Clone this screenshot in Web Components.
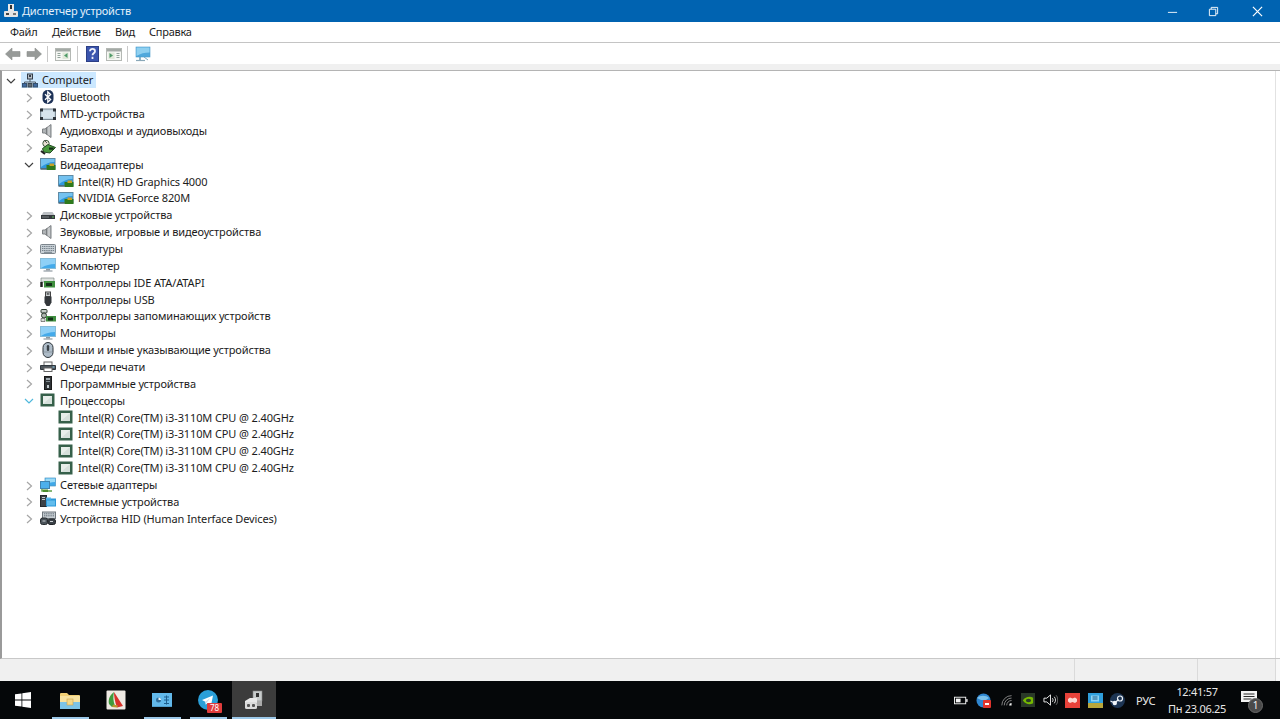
<!DOCTYPE html>
<html lang="ru">
<head>
<meta charset="utf-8">
<title>Диспетчер устройств</title>
<style>
    html, body { margin: 0; height: 100%; overflow: hidden; }
    body {
        display: flex;
        flex-direction: column;
        height: 719px;
        background: #f0f0f0;
        font: 11px "Noto Sans", "Open Sans", sans-serif;
        letter-spacing: -0.12px;
        color: #1c1c1c;
    }
</style>
</head>
<body>

<dm-titlebar>Диспетчер устройств</dm-titlebar>

<dm-menubar>
    <span style="width:42px">Файл</span>
    <span style="width:63px">Действие</span>
    <span style="width:34px">Вид</span>
    <span>Справка</span>
</dm-menubar>

<dm-toolbar></dm-toolbar>

<dm-tree>
    <dm-row level="0" open icon="computer" selected>Computer</dm-row>
    <dm-row level="1" closed icon="bluetooth">Bluetooth</dm-row>
    <dm-row level="1" closed icon="mtd">MTD-устройства</dm-row>
    <dm-row level="1" closed icon="speaker">Аудиовходы и аудиовыходы</dm-row>
    <dm-row level="1" closed icon="battery">Батареи</dm-row>
    <dm-row level="1" open icon="display">Видеоадаптеры</dm-row>
    <dm-row level="2" icon="display">Intel(R) HD Graphics 4000</dm-row>
    <dm-row level="2" icon="display">NVIDIA GeForce 820M</dm-row>
    <dm-row level="1" closed icon="disk">Дисковые устройства</dm-row>
    <dm-row level="1" closed icon="speaker">Звуковые, игровые и видеоустройства</dm-row>
    <dm-row level="1" closed icon="keyboard">Клавиатуры</dm-row>
    <dm-row level="1" closed icon="monitor">Компьютер</dm-row>
    <dm-row level="1" closed icon="ide">Контроллеры IDE ATA/ATAPI</dm-row>
    <dm-row level="1" closed icon="usb">Контроллеры USB</dm-row>
    <dm-row level="1" closed icon="storage">Контроллеры запоминающих устройств</dm-row>
    <dm-row level="1" closed icon="monitor">Мониторы</dm-row>
    <dm-row level="1" closed icon="mouse">Мыши и иные указывающие устройства</dm-row>
    <dm-row level="1" closed icon="printer">Очереди печати</dm-row>
    <dm-row level="1" closed icon="firmware">Программные устройства</dm-row>
    <dm-row level="1" open hot icon="cpu">Процессоры</dm-row>
    <dm-row level="2" icon="cpu">Intel(R) Core(TM) i3-3110M CPU @ 2.40GHz</dm-row>
    <dm-row level="2" icon="cpu">Intel(R) Core(TM) i3-3110M CPU @ 2.40GHz</dm-row>
    <dm-row level="2" icon="cpu">Intel(R) Core(TM) i3-3110M CPU @ 2.40GHz</dm-row>
    <dm-row level="2" icon="cpu">Intel(R) Core(TM) i3-3110M CPU @ 2.40GHz</dm-row>
    <dm-row level="1" closed icon="network">Сетевые адаптеры</dm-row>
    <dm-row level="1" closed icon="system">Системные устройства</dm-row>
    <dm-row level="1" closed icon="hid">Устройства HID (Human Interface Devices)</dm-row>
</dm-tree>

<dm-statusbar></dm-statusbar>

<dm-taskbar></dm-taskbar>

<script>
// all the little pictures, 16x16 unless the user sets another size
const ICONS = {
    app: '<rect x="5" y="1" width="6" height="7" fill="#e8e8e8"/><rect x="7" y="2" width="2" height="4" fill="#333"/><rect x="1" y="8" width="14" height="6" rx="1" fill="#e4e4e4"/><rect x="3" y="10" width="3" height="2" fill="#444"/><rect x="10" y="10" width="3" height="2" fill="#777"/>',
    back: '<path d="M0.500 8L7 2v3.500h8v5H7V14z" fill="#979a98" stroke="#8a8d8b" stroke-width=".6"/>',
    forward: '<path d="M15.500 8L9 2v3.500H1v5h8V14z" fill="#979a98" stroke="#8a8d8b" stroke-width=".6"/>',
    panel_l: '<rect x="0.500" y="2.500" width="15" height="12" fill="#f6f7f4" stroke="#b4b8b4"/><rect x="1" y="3" width="14" height="2.500" fill="#a4aaa6"/><path d="M2.500 7.500h3M2.500 9.500h3M2.500 11.500h3" stroke="#93a49c"/><rect x="7.500" y="6.500" width="6" height="6.500" fill="#dfe8d8"/><path d="M12.500 7v5l-3.500-2.500z" fill="#4f9a68"/>',
    panel_r: '<rect x="0.500" y="2.500" width="15" height="12" fill="#f6f7f4" stroke="#b4b8b4"/><rect x="1" y="3" width="14" height="2.500" fill="#a4aaa6"/><path d="M10.500 7.500h3M10.500 9.500h3M10.500 11.500h3" stroke="#93a49c"/><rect x="2.500" y="6.500" width="6" height="6.500" fill="#dfe8d8"/><path d="M3.500 7v5l3.500-2.500z" fill="#4f9a68"/>',
    help: '<rect x="1.500" y="0.500" width="12" height="15" fill="#3b55ae" stroke="#2c3f86"/><path d="M5 5.200c0-3.200 5-3.200 5 0 0 2-2.500 2-2.500 4M7.500 10.800v2.200" fill="none" stroke="#eef1fa" stroke-width="1.800"/>',
    scan: '<rect x="1" y="1" width="14" height="10" fill="#4fa8dc" stroke="#4b9ac9" stroke-width=".6"/><path d="M1.500 1.500h13v5c-5 0-9 1-13 3.500z" fill="#8fd0f0"/><path d="M5 11v3" stroke="#6a9cb4" stroke-width="1.500"/><path d="M1 14.500h9" stroke="#8aa8b8" stroke-width="1.200"/><path d="M9 11l4 3" stroke="#7aa8c0"/>',
    computer: '<rect x="5.500" y="2" width="5" height="5" fill="#b8c0c8" stroke="#333d48"/><rect x="7" y="3" width="2" height="2" fill="#333d48"/><path d="M8 7v3M2.500 12v-2h11v2" fill="none" stroke="#4f5a64"/><rect x="0.500" y="11.500" width="4" height="3.500" fill="#3f6aa0" stroke="#35506f"/><rect x="6" y="11.500" width="4" height="3.500" fill="#5f6a74" stroke="#3a444d"/><rect x="11.500" y="11.500" width="4" height="3.500" fill="#3f6aa0" stroke="#35506f"/>',
    bluetooth: '<rect x="2.500" y="1" width="11" height="14" rx="5" fill="#1e3358"/><path d="M5 5.200l5.600 5.400-2.800 2.600V2.800l2.800 2.600L5 10.800" fill="none" stroke="#fff" stroke-width="1.300"/>',
    mtd: '<rect x="0.500" y="3" width="15" height="10.500" rx="1" fill="#c5d4de" stroke="#7d8a94"/><rect x="2" y="4.500" width="12" height="7.500" fill="#d8e4ec"/><rect x="0" y="2.500" width="3" height="3" fill="#2f343a"/><rect x="13" y="2.500" width="3" height="3" fill="#2f343a"/><rect x="0" y="11" width="3" height="3" fill="#2f343a"/><rect x="13" y="11" width="3" height="3" fill="#2f343a"/>',
    speaker: '<path d="M2.500 6H5l6-4.500v13L5 10H2.500z" fill="#b2b6b8" stroke="#7d8184"/><path d="M6.500 4.500v7" stroke="#7a7e80" stroke-width="1.200"/><path d="M9 3.500v9" stroke="#dcdedf"/>',
    battery: '<circle cx="6" cy="4.500" r="3.200" fill="#e8e0d4" stroke="#3f5a3f"/><path d="M2.500 9.500l5.500-4 7.500 3-5.500 5.500-6.500-1z" fill="#4a9a3e" stroke="#244d24"/><path d="M1 12l4 3" stroke="#222" stroke-width="2"/><rect x="9" y="8.500" width="4.500" height="2.200" fill="#142e18"/><path d="M4 1l3 3" stroke="#555"/>',
    display: '<rect x="0" y="2" width="15.500" height="11.500" fill="#5f8aa4"/><rect x="1" y="3" width="13.500" height="9" fill="#2f98de"/><path d="M1 3h13.500v3C9 6 5 8 1 11z" fill="#74c2f0"/><rect x="6.500" y="9" width="9" height="5" fill="#2f7a1c"/><rect x="9.500" y="7.500" width="4.500" height="2.500" fill="#c8a226"/><rect x="1" y="12.500" width="5.500" height="1" fill="#44545f"/>',
    disk: '<path d="M1.500 8l2-3h9l2 3z" fill="#bcc0c4"/><rect x="1" y="8" width="14" height="4" fill="#34393d"/><rect x="2" y="9.500" width="7" height="1" fill="#7e8488"/><rect x="12" y="9.500" width="2" height="1" fill="#66c060"/>',
    keyboard: '<rect x="0.500" y="3.500" width="15" height="9" rx="1" fill="#c8d0d6" stroke="#7c858c"/><path d="M2 5.500h12M2 7.500h12M2 9.500h12" stroke="#75818a" stroke-dasharray="1.200 .6"/><path d="M4 11.300h8" stroke="#75818a"/>',
    monitor: '<rect x="0.500" y="1.500" width="15" height="10" fill="#44aaea" stroke="#86bcd8"/><path d="M1 2h14v5c-5 0-9 1-14 4z" fill="#8ed0f6"/><path d="M6 12h4v1.500H6z" fill="#8f9aa2"/><path d="M3.500 14h9" stroke="#8f9aa2" stroke-width="1.200"/>',
    ide: '<path d="M1 4h13v4H1z" fill="#dfe3e0" stroke="#70787a" stroke-width=".6"/><rect x="4" y="7" width="11" height="6.500" fill="#3f8f3f"/><rect x="6" y="9" width="6" height="3" fill="#143018"/><path d="M1.500 8v5" stroke="#222" stroke-width="2.500"/>',
    usb: '<rect x="5.500" y="1" width="5" height="4.500" fill="#cdd2d4" stroke="#444"/><rect x="6.800" y="2.200" width="1" height="1.500" fill="#222"/><rect x="8.300" y="2.200" width="1" height="1.500" fill="#222"/><path d="M4.500 5.500h7v6l-2 3.500h-3l-2-3.500z" fill="#33373b"/>',
    storage: '<rect x="1" y="1.500" width="6" height="3.500" rx="1" fill="#c6cdc9" stroke="#2f3d32"/><circle cx="4" cy="7.500" r="2.500" fill="#aeb7b0" stroke="#2f3d32"/><rect x="6" y="8" width="10" height="5.500" fill="#3f8f3f"/><rect x="8" y="9.500" width="5" height="3" fill="#143018"/><path d="M1 10.500h4v3H1z" fill="#d8dcd8" stroke="#444" stroke-width=".6"/>',
    mouse: '<rect x="3" y="0.500" width="10" height="15" rx="5" fill="#aebcc8" stroke="#2f363c"/><rect x="6.800" y="3" width="2.400" height="6" rx="1.200" fill="#3a4248"/><path d="M4 10h8" stroke="#8e9aa4"/>',
    printer: '<rect x="4" y="3" width="8" height="3.500" fill="#f8fafa" stroke="#666"/><path d="M0.500 6.500h15v4h-15z" fill="#4e565c" stroke="#30373c"/><rect x="4" y="9" width="8" height="3.500" fill="#fff" stroke="#666"/><path d="M12.500 8h2" stroke="#8fd0f0"/>',
    firmware: '<rect x="4.500" y="1.500" width="7" height="13" fill="#2f3336" stroke="#1a1a1a"/><rect x="6" y="3" width="4" height="2" fill="#a0aab0"/><rect x="6" y="6" width="4" height="1" fill="#7e888e"/><rect x="7" y="10" width="2" height="3" fill="#c0c8cc"/>',
    cpu: '<rect x="0.500" y="1.500" width="14" height="13" fill="#36604a"/><rect x="3" y="4" width="9" height="8" fill="#d6e0db"/><path d="M3 4h9l-9 8z" fill="#e8eeea"/>',
    network: '<rect x="5" y="1" width="10.500" height="8" fill="#3fa8e8" stroke="#4a94c0" stroke-width=".7"/><path d="M5.500 1.500h9.500v3.500c-4 0-7 1-9.500 3z" fill="#9adaf6"/><rect x="0.500" y="4.500" width="9" height="7" fill="#4cb0ec" stroke="#3f84b0"/><path d="M2 12v2h10" stroke="#5e9e46" stroke-width="1.500" fill="none"/><rect x="3" y="12.500" width="5" height="2.500" fill="#4d8d2e"/>',
    system: '<rect x="0.500" y="2.500" width="6" height="11" fill="#3c4248" stroke="#23272b"/><path d="M2 4.500h3M2 6.500h3" stroke="#c0c6ca"/><rect x="6" y="5.500" width="10" height="8" fill="#2c98d8"/><rect x="6" y="4.500" width="5" height="2" fill="#58b8ea"/><rect x="7" y="7.500" width="8" height="5" fill="#62bcec"/>',
    hid: '<rect x="2.500" y="2" width="13" height="6.500" fill="#c6cdd2" stroke="#6f777d"/><path d="M4 3.800h10M4 5.800h10" stroke="#66717a" stroke-dasharray="1.200 .6"/><rect x="0.500" y="8" width="7" height="6.500" rx="2" fill="#4a535a" stroke="#262b2f"/><rect x="8" y="9" width="7.500" height="5.500" rx="2" fill="#3a4147" stroke="#202428"/><path d="M2.500 11h3M10 11.500h3" stroke="#cdd2d6"/>',

    windows: '<path d="M0 2.300l6.500-.9v6.200H0zM7.300 1.300L16 0v7.600H7.300zM0 8.400h6.500v6.200L0 13.700zM7.300 8.400H16V16l-8.700-1.200z" fill="#fff"/>',
    explorer: '<path d="M0 4a1 1 0 0 1 1-1h6l2 2h10a1 1 0 0 1 1 1v12a1 1 0 0 1-1 1H1a1 1 0 0 1-1-1z" fill="#f2cf74"/><rect x="0" y="6" width="20" height="6" fill="#f8e2a0"/><rect x="0" y="12" width="20" height="7" fill="#7cc4e8"/><rect x="7" y="9" width="6" height="6" fill="#f4d98a" stroke="#c9a24f" stroke-width=".6"/>',
    reader: '<rect x="0.500" y="0.500" width="19" height="19" rx="1" fill="#efeae4"/><path d="M8 2l9 14-6 1.500C9 12 8 7 8 2z" fill="#d8322a"/><path d="M8 2C4 5 2 9 3 14l3 3 3-1C7 11 7 6 8 2z" fill="#3f9a3c"/><path d="M6 17l5 .5 1-2-5-1z" fill="#b8962f"/>',
    clock: '<rect x="0" y="3" width="20" height="14" fill="#62b8ea"/><rect x="0" y="16" width="20" height="1" fill="#4f9dcc"/><circle cx="6.500" cy="10" r="2.500" fill="#2f6c9a"/><path d="M6.500 10V7.500A2.500 2.500 0 0 1 9 10z" fill="#e8f4fb"/><path d="M12 7h5M14.500 5.500v9M12 10h5M12 13.500h5" stroke="#1f5f8e"/>',
    telegram: '<circle cx="10" cy="10" r="10" fill="#2a9fd8"/><path d="M4 10l11-4.500-2 10-3.500-2.600-1.800 1.800-.4-3z" fill="#fff"/><path d="M7.300 11.700l5-3.800-3.800 5" fill="#c5dfee"/>',
    devmgr: '<rect x="9" y="1" width="9" height="10" fill="#c8cccc" stroke="#888" stroke-width=".6"/><rect x="12" y="3" width="3" height="4" fill="#333"/><path d="M1 11l5-3h7v5H6l-5 3z" fill="#e8e8e8"/><rect x="1" y="12" width="12" height="7" rx="1.500" fill="#dcdcdc"/><rect x="3" y="14" width="3" height="3" rx="1" fill="#555"/><rect x="8" y="14" width="3" height="3" rx="1" fill="#555"/><rect x="13" y="11" width="5" height="5" fill="#aaa"/>',

    tray_battery: '<rect x="0.500" y="4.500" width="12" height="7" fill="none" stroke="#f4f4f4"/><rect x="2" y="6" width="5" height="4" fill="#f4f4f4"/><rect x="13" y="6.500" width="1.500" height="3" fill="#f4f4f4"/>',
    tray_browser: '<circle cx="7.500" cy="7.500" r="7" fill="#2f86d0"/><path d="M1 5c3-3 9-3 12 0l-3 2H5z" fill="#7cc0ea"/><rect x="7" y="7" width="8" height="8" rx="1" fill="#e0342c"/><rect x="9" y="10" width="4" height="2" fill="#fff"/>',
    tray_wifi: '<path d="M1 14A12 12 0 0 1 13 2M4 14a9 9 0 0 1 9-9M7 14a6 6 0 0 1 6-6" fill="none" stroke="#8f8f8f" stroke-width="1.100"/><path d="M10 14a3 3 0 0 1 3-3v3z" fill="#f0f0f0"/>',
    tray_nvidia: '<rect x="0" y="0" width="15" height="15" fill="#2a3a28"/><path d="M2 8c2-4 8-5 11-3v6c-4 2-8 1-11-3z" fill="#76b900"/><ellipse cx="8" cy="8" rx="2.800" ry="1.800" fill="#2a3a28"/>',
    tray_speaker: '<path d="M1 5.500h3l4-3.500v11L4 9.500H1z" fill="none" stroke="#f0f0f0"/><path d="M10 5.500c1 1.300 1 2.700 0 4M12 4c1.800 2 1.800 5 0 7" fill="none" stroke="#e4e4e4"/><path d="M14 2.500c2.400 3 2.400 7 0 10" fill="none" stroke="#7e7e7e"/>',
    tray_red: '<rect x="0" y="0" width="15" height="15" fill="#e8423a"/><path d="M3 6l2-1.500 2.500 1 2.500-1L12 6v2.500l-2 1.500-2.500-1L5 10 3 8.500z" fill="#fbd9d4"/>',
    tray_blue: '<rect x="0" y="0" width="15" height="15" fill="#2f9fdc"/><rect x="0" y="10" width="15" height="5" fill="#b9a63a"/><rect x="3" y="2.500" width="8" height="6" fill="#8ed4f4"/><path d="M4.500 4h5M4.500 6h5" stroke="#1e5c86"/>',
    tray_steam: '<circle cx="7.500" cy="7.500" r="7.500" fill="#1d3553"/><circle cx="10" cy="5.500" r="2.500" fill="none" stroke="#f0f4f8" stroke-width="1.200"/><circle cx="4.800" cy="10" r="2.200" fill="#f0f4f8"/><path d="M0.500 8l4.300 2 3.700-3.500" stroke="#f0f4f8" stroke-width="1.200" fill="none"/>',
    tray_notify: '<path d="M0 0h16v11h-5l-3 3v-3H0z" fill="#f4f4f4"/><path d="M2.500 3h11M2.500 5.500h11M2.500 8h8" stroke="#2a2a2a"/>'
};

class DmIcon extends HTMLElement{
    static get observedAttributes(){ return ['name']; }

    constructor(){
        super();
        this.attachShadow({mode: 'open'}).innerHTML = `
            <style>
                :host{ display: block; flex: none; width: 16px; height: 16px; }
                svg{ display: block; width: 100%; height: 100%; }
            </style>
            <svg></svg>
        `;
    }
    attributeChangedCallback(){ this.draw(); }
    connectedCallback(){ this.draw(); }

    draw = () => {
        const size = this.getAttribute('size') || 16;
        const box = this.getAttribute('box') || 16;
        this.style.width = this.style.height = size + 'px';
        const svg = this.shadowRoot.querySelector('svg');
        svg.setAttribute('viewBox', `0 0 ${box} ${box}`);
        svg.innerHTML = ICONS[this.getAttribute('name')] || '';
    }
}

class DmTitlebar extends HTMLElement{
    constructor(){
        super();
        this.attachShadow({mode: 'open'}).innerHTML = `
            <style>
                :host{
                    display: flex;
                    flex: none;
                    align-items: center;
                    height: 22px;
                    padding-left: 3px;
                    background: #0063b1;
                    letter-spacing: -0.2px;
                }
                dm-icon{ margin-right: 3px; }
                .text{ flex: 1; color: #e4f0fa; padding-bottom: 2px; }
                .btn{ width: 44px; height: 22px; display: flex; align-items: center; justify-content: center; }
                svg{ width: 11px; height: 11px; display: block; }
            </style>
            <dm-icon name="app"></dm-icon>
            <span class="text"><slot></slot></span>
            <span class="btn" style="width:38px"><svg viewBox="0 0 12 12"><path d="M1 7h10" stroke="#cfe2f2" stroke-width="1.200"/></svg></span>
            <span class="btn"><svg viewBox="0 0 12 12" fill="none" stroke="#fff"><path d="M1.500 3.500h7v7h-7zM3.500 3.500v-2h7v7h-2"/></svg></span>
            <span class="btn" style="margin-right:1px"><svg viewBox="0 0 12 12"><path d="M1 1l10 10M11 1L1 11" stroke="#fff" stroke-width="1.300"/></svg></span>
        `;
    }
}

class DmMenubar extends HTMLElement{
    constructor(){
        super();
        this.attachShadow({mode: 'open'}).innerHTML = `
            <style>
                :host{
                    display: flex;
                    flex: none;
                    align-items: center;
                    height: 19px;
                    padding: 0 0 1px 10px;
                    background: #fff;
                    border-bottom: 1px solid #c4c4c4;
                    letter-spacing: -0.25px;
                }
                ::slotted(span){ display: block; }
            </style>
            <slot></slot>
        `;
    }
}

class DmToolbar extends HTMLElement{
    constructor(){
        super();
        this.attachShadow({mode: 'open'}).innerHTML = `
            <style>
                :host{
                    display: flex;
                    flex: none;
                    align-items: center;
                    height: 21px;
                    padding-left: 5px;
                    background: #fff;
                }
                i{ display: block; width: 1px; height: 16px; background: #c8c8c8; }
            </style>
            <dm-icon name="back" style="margin-right:5px"></dm-icon>
            <dm-icon name="forward" style="margin-right:5px"></dm-icon>
            <i style="margin-right:7px"></i>
            <dm-icon name="panel_l" style="margin-right:6px"></dm-icon>
            <i style="margin-right:7px"></i>
            <dm-icon name="help" style="margin-right:5px"></dm-icon>
            <dm-icon name="panel_r" style="margin-right:5px"></dm-icon>
            <i style="margin-right:7px"></i>
            <dm-icon name="scan"></dm-icon>
        `;
    }
}

class DmTree extends HTMLElement{
    constructor(){
        super();
        this.attachShadow({mode: 'open'}).innerHTML = `
            <style>
                :host{
                    display: block;
                    flex: 1;
                    min-height: 0;
                    margin-top: 6px;
                    padding-top: 0.5px;
                    background: linear-gradient(#e2e2e2, #e2e2e2) no-repeat 1273px 0 / 1px 100%, #fff;
                    border-top: 1px solid #b4b4b4;
                    border-left: 2px solid #9a9a9a;
                    border-bottom: 1px solid #c8c8c8;
                }
            </style>
            <slot></slot>
        `;
    }
}

class DmRow extends HTMLElement{
    constructor(){
        super();
        this.attachShadow({mode: 'open'}).innerHTML = `
            <style>
                :host{
                    display: flex;
                    align-items: center;
                    height: 16.865px;
                }
                .exp{ width: 18px; height: 12px; flex: none; }
                .exp svg{ display: block; width: 18px; height: 12px; }
                .item{ display: flex; align-items: center; height: 16px; padding: 0 3px 0 1px; margin-left: 1px; }
                :host([selected]) .item{ background: #cce8ff; }
                .label{ margin-left: 4px; white-space: nowrap; }
            </style>
            <span class="exp"></span>
            <span class="item">
                <dm-icon></dm-icon>
                <span class="label"><slot></slot></span>
            </span>
        `;
    }
    connectedCallback(){
        this.style.paddingLeft = (parseInt(this.getAttribute('level')) * 18) + 'px';
        this.shadowRoot.querySelector('dm-icon').setAttribute('name', this.getAttribute('icon'));
        const exp = this.shadowRoot.querySelector('.exp');
        if(this.hasAttribute('closed'))
            exp.innerHTML = '<svg viewBox="0 0 18 12"><path d="M7 3l4.500 4L7 11" fill="none" stroke="#a6a6a6" stroke-width="1.200"/></svg>';
        else if(this.hasAttribute('open')){
            const stroke = this.hasAttribute('hot') ? '#4fb8dc' : '#404040';
            exp.innerHTML = `<svg viewBox="0 0 18 12"><path d="M5 5l4 4 4-4" fill="none" stroke="${stroke}" stroke-width="1.200"/></svg>`;
        }
    }
}

class DmStatusbar extends HTMLElement{
    constructor(){
        super();
        this.attachShadow({mode: 'open'}).innerHTML = `
            <style>
                :host{
                    display: flex;
                    flex: none;
                    height: 22px;
                    background: #f0f0f0;
                }
                span{ display: block; height: 100%; border-right: 1px solid #dadada; box-sizing: border-box; }
                span:last-child{ flex: 1; border: 0; background: #f8f8f8; }
            </style>
            <span style="width:1075px"></span>
            <span style="width:123px"></span>
            <span style="width:78px"></span>
            <span></span>
        `;
    }
}

class DmTaskitem extends HTMLElement{
    constructor(){
        super();
        this.attachShadow({mode: 'open'}).innerHTML = `
            <style>
                :host{
                    display: flex;
                    flex: none;
                    align-items: center;
                    justify-content: center;
                    position: relative;
                    width: 46px;
                    height: 38px;
                }
                :host([running])::after{
                    content: "";
                    position: absolute;
                    left: 5px;
                    right: 4px;
                    bottom: 0;
                    height: 2px;
                    background: #9cc8e8;
                }
                :host([active]){ background: #3c3c3c; width: 44px; margin-left: 1px; }
                :host([active])::after{ left: 0; right: 0; }
                .badge{
                    position: absolute;
                    left: 22px;
                    top: 22px;
                    padding: 0 3px;
                    height: 10px;
                    line-height: 10px;
                    font-size: 8px;
                    letter-spacing: 0;
                    color: #fff;
                    background: #e03c3c;
                    border-radius: 1px;
                }
                .badge:empty{ display: none; }
            </style>
            <slot></slot>
            <span class="badge"></span>
        `;
    }
    connectedCallback(){
        this.shadowRoot.querySelector('.badge').textContent = this.getAttribute('badge') || '';
    }
}

class DmTray extends HTMLElement{
    constructor(){
        super();
        this.attachShadow({mode: 'open'}).innerHTML = `
            <style>
                :host{
                    display: flex;
                    flex: none;
                    align-items: center;
                    height: 38px;
                    color: #e8e8e8;
                }
                .lang{ width: 20px; margin: 0 12px 0 11px; white-space: nowrap; }
                .clock{ width: 58px; text-align: center; line-height: 17px; white-space: nowrap; letter-spacing: -0.3px; }
                .notify{ position: relative; margin: 0 23px 0 15px; height: 16px; top: -1px; }
                .count{
                    position: absolute;
                    left: 7px;
                    top: 7px;
                    width: 15px;
                    height: 15px;
                    line-height: 13px;
                    box-sizing: border-box;
                    text-align: center;
                    font-size: 10px;
                    color: #f4f4f4;
                    background: #4a4a4a;
                    border: 1px solid #6a6a6a;
                    border-radius: 50%;
                }
            </style>
            <dm-icon name="tray_battery" style="margin-right:7px" size="15"></dm-icon>
            <dm-icon name="tray_browser" size="15" box="15" style="margin-right:10px"></dm-icon>
            <dm-icon name="tray_wifi" size="13" style="margin-right:7px"></dm-icon>
            <dm-icon name="tray_nvidia" size="14" box="15" style="margin-right:8px"></dm-icon>
            <dm-icon name="tray_speaker" size="15" style="margin-right:7px"></dm-icon>
            <dm-icon name="tray_red" size="15" box="15" style="margin-right:8px"></dm-icon>
            <dm-icon name="tray_blue" size="15" box="15" style="margin-right:7px"></dm-icon>
            <dm-icon name="tray_steam" size="15" box="15"></dm-icon>
            <span class="lang">РУС</span>
            <div class="clock"><div>12:41:57</div><div>Пн 23.06.25</div></div>
            <span class="notify"><dm-icon name="tray_notify"></dm-icon><span class="count">1</span></span>
        `;
    }
}

class DmTaskbar extends HTMLElement{
    constructor(){
        super();
        this.attachShadow({mode: 'open'}).innerHTML = `
            <style>
                :host{
                    display: flex;
                    flex: none;
                    align-items: center;
                    height: 38px;
                    background: #050709;
                }
                .start{ width: 46px; display: flex; justify-content: center; flex: none; }
                .items{ display: flex; flex: 1; padding-left: 1px; }
            </style>
            <span class="start"><dm-icon name="windows"></dm-icon></span>
            <div class="items">
                <dm-taskitem running><dm-icon name="explorer" size="20" box="20"></dm-icon></dm-taskitem>
                <dm-taskitem><dm-icon name="reader" size="20" box="20"></dm-icon></dm-taskitem>
                <dm-taskitem running><dm-icon name="clock" size="20" box="20"></dm-icon></dm-taskitem>
                <dm-taskitem running badge="78"><dm-icon name="telegram" size="20" box="20"></dm-icon></dm-taskitem>
                <dm-taskitem running active><dm-icon name="devmgr" size="20" box="20"></dm-icon></dm-taskitem>
            </div>
            <dm-tray></dm-tray>
        `;
    }
}

customElements.define('dm-icon', DmIcon);
customElements.define('dm-titlebar', DmTitlebar);
customElements.define('dm-menubar', DmMenubar);
customElements.define('dm-toolbar', DmToolbar);
customElements.define('dm-tree', DmTree);
customElements.define('dm-row', DmRow);
customElements.define('dm-statusbar', DmStatusbar);
customElements.define('dm-taskitem', DmTaskitem);
customElements.define('dm-tray', DmTray);
customElements.define('dm-taskbar', DmTaskbar);
</script>
</body>
</html>
